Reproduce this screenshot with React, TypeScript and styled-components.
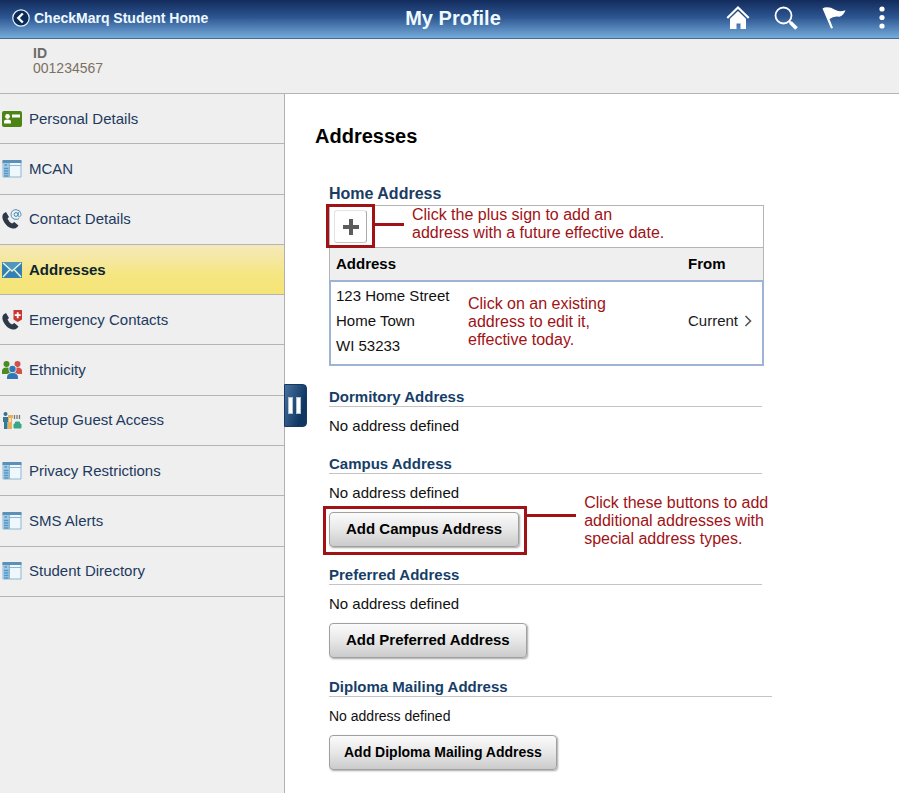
import React from "react";
import styled, { createGlobalStyle, css } from "styled-components";

const GlobalStyle = createGlobalStyle`
  *, *::before, *::after { box-sizing: border-box; }
  body {
    margin: 0;
    background: #fff;
    color: #111;
    font: 15px/20px "Liberation Sans", Arial, sans-serif;
  }
  #root { display: flex; flex-direction: column; min-height: 100vh; }
`;

const RED = "#a01216";

/* ---------- header ---------- */

const TopBar = styled.header`
  display: grid;
  grid-template-columns: 1fr auto 1fr;
  align-items: center;
  height: 39px;
  padding: 0 5px 2px 12px;
  color: #fff;
  background: linear-gradient(#132b5c, #2c5590 45%, #76acdc);
  border-bottom: 1px solid #46698c;
`;

const BackLink = styled.a`
  display: flex;
  align-items: center;
  gap: 4px;
  color: #eef9ff;
  font-size: 14px;
  font-weight: bold;
  text-decoration: none;
  white-space: nowrap;
`;

const PageTitle = styled.h1`
  margin: 0;
  color: #eefaff;
  font-size: 20px;
  line-height: 24px;
`;

const Actions = styled.div`
  display: flex;
  justify-content: flex-end;
  align-items: center;
  gap: 24px;
`;

const IconButton = styled.button`
  display: flex;
  padding: 0;
  border: 0;
  background: none;
  color: #fff;
  cursor: pointer;
`;

const IdBar = styled.dl`
  margin: 0;
  padding: 7px 33px 17px;
  min-height: 55px;
  background: #efefef;
  border-bottom: 1px solid #b4b4b4;
  font-size: 14px;
  line-height: 15px;
  color: #7d6f62;

  dt { font-weight: bold; color: #6e6a68; }
  dd { margin: 0; }
`;

/* ---------- side navigation ---------- */

const Columns = styled.div`
  display: flex;
  flex: 1;
`;

const Sidebar = styled.aside`
  position: relative;
  flex: none;
  width: 285px;
  background: #efefef;
  border-right: 1px solid #b0b0b0;
`;

const NavList = styled.ul`
  display: grid;
  grid-auto-rows: 1fr;
  min-height: 503px;
  margin: 0;
  padding: 0;
  list-style: none;
`;

const NavLink = styled.a<{ $active?: boolean }>`
  display: flex;
  align-items: center;
  gap: 7px;
  height: 100%;
  padding-left: 2px;
  border-bottom: 1px solid #b4b4b4;
  color: #213a5e;
  text-decoration: none;
  ${(p) =>
    p.$active &&
    css`
      color: #0c2430;
      font-weight: bold;
      background: linear-gradient(#f4e9bc, #f6e682 60%, #f5e476);
    `}
`;

const CollapseButton = styled.button`
  position: absolute;
  top: 290px;
  left: 284px;
  z-index: 1;
  display: flex;
  justify-content: center;
  align-items: center;
  gap: 3px;
  width: 23px;
  height: 43px;
  padding: 0 2px 0 0;
  border: 1px solid #173a63;
  border-radius: 0 4px 4px 0;
  background: linear-gradient(105deg, #47719f, #103762 75%);

  span {
    width: 5px;
    height: 17px;
    background: #fff;
    border: 1px solid #b4c3d4;
  }
`;

/* ---------- main content ---------- */

const Main = styled.main`
  flex: 1;
  padding: 30px 30px 24px;
`;

const Heading = styled.h2`
  margin: 0 0 35px;
  font-size: 20px;
  line-height: 24px;
  color: #000;
`;

const Sections = styled.div`
  display: flex;
  flex-direction: column;
  gap: 19px;
  max-width: 457px;
  padding-left: 14px;
`;

const HomeSection = styled.section`
  margin-bottom: 3px;
`;

const HomeHeading = styled.h3`
  margin: 0;
  font-size: 16px;
  line-height: 22px;
  color: #1a3d63;
`;

const GridBox = styled.div`
  max-width: 435px;
`;

const GridToolbar = styled.div`
  display: flex;
  align-items: center;
  height: 42px;
  padding: 0 4px;
  border: 1px solid #b5b5b5;
  border-bottom: 0;
`;

const Callout = styled.div<{ $kind: "icon" | "button" }>`
  position: relative;
  width: fit-content;

  &::before {
    content: "";
    position: absolute;
    border: 3px solid ${RED};
    pointer-events: none;
    inset: ${(p) => (p.$kind === "icon" ? "-6px -8px -5px" : "-6px -8px -8px -6px")};
  }
  &::after {
    content: "";
    position: absolute;
    left: calc(100% + 8px);
    top: ${(p) => (p.$kind === "icon" ? "13px" : "2px")};
    width: ${(p) => (p.$kind === "icon" ? "29px" : "49px")};
    height: 3px;
    background: ${RED};
  }
`;

const Note = styled.p<{ $kind: "icon" | "button" | "row" }>`
  position: absolute;
  z-index: 1;
  margin: 0;
  color: ${RED};
  font-size: 16px;
  font-weight: normal;
  line-height: 18px;
  white-space: nowrap;
  pointer-events: none;
  ${(p) =>
    ({
      icon: "left: calc(100% + 45px); top: -4px;",
      button: "left: calc(100% + 65px); top: -18px;",
      row: "left: 137px; top: 13px;",
    })[p.$kind]}
`;

const PlusButton = styled.button`
  display: flex;
  align-items: center;
  justify-content: center;
  width: 33px;
  height: 33px;
  padding: 0;
  border: 1px solid #e3e3e3;
  border-right-color: #aaa;
  border-bottom-color: #c4c4c4;
  border-radius: 3px;
  background: #fff;
  cursor: pointer;
`;

const AddressTable = styled.table`
  width: 100%;
  border-collapse: separate;
  border-spacing: 0;
  text-align: left;

  th {
    height: 33px;
    padding: 0 6px;
    background: #efefef;
    border: solid #b5b5b5;
    border-width: 1px 0 0;
    color: #000;
  }
  th:first-child { border-left-width: 1px; }
  th:last-child { width: 82px; border-right-width: 1px; }

  td {
    position: relative;
    padding: 1px 6px 6px 5px;
    border: solid #9fb4d4;
    border-width: 2px 0;
  }
  td:first-child { border-left-width: 2px; }
  td:last-child { border-right-width: 2px; padding-left: 6px; }
`;

const Street = styled.address`
  font-style: normal;
  line-height: 25px;
`;

const RowLink = styled.a`
  display: flex;
  align-items: center;
  gap: 6px;
  color: #1a1a1a;
  text-decoration: none;
`;

const SectionHeading = styled.h3<{ $wide?: boolean }>`
  margin: 0 0 9px;
  border-bottom: 1px solid #c4c4c4;
  max-width: ${(p) => (p.$wide ? "443px" : "433px")};
  font-size: 15px;
  line-height: ${(p) => (p.$wide ? "19px" : "18px")};
  color: #163e68;
`;

const Empty = styled.p<{ $compact?: boolean }>`
  margin: 0;
  font-size: ${(p) => (p.$compact ? "14px" : "15px")};
`;

const AddButton = styled.button<{ $compact?: boolean }>`
  display: block;
  height: 35px;
  padding: 0 16px 2px;
  border: 1px solid #a0a0a0;
  border-radius: 4px;
  background: linear-gradient(#fbfbfb, #e7e7e7 50%, #cbcbcb);
  box-shadow: 1px 1px 2px rgba(0, 0, 0, 0.35);
  color: #000;
  font: bold 15px/20px "Liberation Sans", Arial, sans-serif;
  white-space: nowrap;
  cursor: pointer;
  ${(p) => p.$compact && "font-size: 14px; padding: 0 14px 2px;"}
`;

const ButtonRow = styled.div`
  display: flex;
  margin-top: 9px;
`;

/* ---------- icons ---------- */

const PHONE =
  "M1.500 4.500Q-.5 7 1 11q3 7 9.500 8.500 3 .5 4.800-1.500l1.200-1.500-4.200-3.500-2.300 1.500Q7 13 5.500 9.500L7 8 4 3z";

const CardIcon = () => (
  <svg width="20" height="20" viewBox="0 0 20 20" aria-hidden="true">
    <rect y="2" width="20" height="16" rx="2" fill="#4d8515" />
    <circle cx="5.500" cy="7.500" r="2.400" fill="#fff" />
    <path d="M2 14.500v-2q0-2 3.500-2t3.500 2v2zM10 5.500h8v3h-8z" fill="#fff" />
  </svg>
);

const WindowIcon = () => (
  <svg width="20" height="20" viewBox="0 0 20 20" aria-hidden="true">
    <path d="M1 2h18v16H1z" fill="#edf7fc" stroke="#8fb6d0" />
    <path d="M.5 1h19v3H.5z" fill="#5c90b6" />
    <path d="M1 4h6v14H1z" fill="#a0cae5" />
    <path d="M2.500 6h2.500M2 9.500h4.500M2 12h4.500M2 14.500h4.500M2 17h4.500" stroke="#5596c4" strokeWidth="1.500" />
    <path d="M7.500 4v14M6 6.500h13" stroke="#8fb6d0" fill="none" />
  </svg>
);

const ContactIcon = () => (
  <svg width="20" height="20" viewBox="0 0 20 20" aria-hidden="true">
    <path d={PHONE} fill="#2d3948" />
    <circle cx="14" cy="5.500" r="1.900" fill="none" stroke="#3d87b7" />
    <path
      d="M16.300 3v3.500q0 1.500 1.300 1.300 1.600-.6 1.500-2.600Q18.500.9 14 .6 9.300.9 9 5.500q.4 4.600 5 4.900 1.700 0 3-.8"
      fill="none"
      stroke="#4f92bf"
    />
  </svg>
);

const MailIcon = () => (
  <svg width="20" height="20" viewBox="0 0 20 20" aria-hidden="true">
    <path d="M0 2h20v16H0z" fill="#3381b4" />
    <path d="M0 2h20l-10 8z" fill="#5295bd" />
    <path d="M1 3l9 8 9-8M1 17l6.500-7M19 17l-6.500-7" fill="none" stroke="#e8f6dd" strokeWidth="1.400" />
  </svg>
);

const EmergencyIcon = () => (
  <svg width="20" height="20" viewBox="0 0 20 20" aria-hidden="true">
    <path d={PHONE} fill="#2d3948" />
    <path d="M11.500 0h8.500v9.500L15.700 12l-4.200-2.500z" fill="#c63732" />
    <path d="M15.700 2.200v6M12.700 5.200h6" stroke="#fff" strokeWidth="1.800" />
  </svg>
);

const PeopleIcon = () => (
  <svg width="20" height="20" viewBox="0 0 20 20" aria-hidden="true">
    <circle cx="4.500" cy="4" r="3" fill="#4c8a22" />
    <path d="M0 14V11q0-3.500 4.500-3.500T9 11v3z" fill="#4c8a22" />
    <circle cx="15.500" cy="4" r="3" fill="#d0504a" />
    <path d="M11 14v-3q0-3.500 4.500-3.500T20 11v3z" fill="#d0504a" />
    <circle cx="10.500" cy="9" r="4" fill="#efefef" />
    <path d="M4 20v-3q0-4.500 6.500-4.500T17 17v3z" fill="#efefef" />
    <circle cx="10.500" cy="9" r="3.200" fill="#2f78b5" />
    <path d="M5 19v-1.500q0-4.500 5.500-4.500t5.500 4.500V19z" fill="#2f78b5" />
  </svg>
);

const GuestIcon = () => (
  <svg width="20" height="20" viewBox="0 0 20 20" aria-hidden="true">
    <circle cx="3.500" cy="4" r="2" fill="#35708f" />
    <path d="M1 7h5v5H5.500v7H2v-7H1z" fill="#397894" />
    <path d="M6 5h5v3h-1v11H6z" fill="#e9ae58" />
    <path d="M7 8h2v4H7z" fill="#f8e1b8" />
    <path d="M12.500 5v4M15 5v4M17.500 5v4" stroke="#777" strokeWidth="1.300" />
    <path d="M12 14h7v4h-7zM13.500 14v-2h4v2" fill="#37a789" stroke="#37a789" />
  </svg>
);

const navItems = [
  { label: "Personal Details", Icon: CardIcon },
  { label: "MCAN", Icon: WindowIcon },
  { label: "Contact Details", Icon: ContactIcon },
  { label: "Addresses", Icon: MailIcon, active: true },
  { label: "Emergency Contacts", Icon: EmergencyIcon },
  { label: "Ethnicity", Icon: PeopleIcon },
  { label: "Setup Guest Access", Icon: GuestIcon },
  { label: "Privacy Restrictions", Icon: WindowIcon },
  { label: "SMS Alerts", Icon: WindowIcon },
  { label: "Student Directory", Icon: WindowIcon },
];

export default function App() {
  return (
    <>
      <GlobalStyle />
      <TopBar>
        <BackLink href="#home">
          <svg width="18" height="18" viewBox="0 0 18 18" aria-hidden="true">
            <circle cx="9" cy="9" r="8.200" fill="#0c2c57" stroke="#e3f4ff" strokeWidth="1.200" />
            <path d="M10.800 4.500L6.300 9l4.500 4.500" fill="none" stroke="#fff" strokeWidth="2.400" />
          </svg>
          CheckMarq Student Home
        </BackLink>
        <PageTitle>My Profile</PageTitle>
        <Actions>
          <IconButton aria-label="Home">
            <svg width="24" height="24" viewBox="0 0 24 24" fill="currentColor">
              <path d="M12 0L23.500 11.200 22 12.700 12 3 2 12.700.5 11.200z" />
              <path d="M12 5l8 7.700V23h-5.500v-5.500h-4V23H4V12.700z" />
            </svg>
          </IconButton>
          <IconButton aria-label="Search">
            <svg width="24" height="24" viewBox="0 0 24 24" fill="none" stroke="currentColor">
              <circle cx="9.500" cy="9.500" r="8" strokeWidth="1.800" />
              <path d="M15 15l2 2" strokeWidth="2" />
              <path d="M16.500 16.500l6 6" strokeWidth="3.800" />
            </svg>
          </IconButton>
          <IconButton aria-label="Notifications">
            <svg width="24" height="24" viewBox="0 0 24 24" fill="currentColor">
              <path d="M.5 2.500L2.500 1.500Q8 .5 12.500 3.500t11 .8Q22 9 17.500 10.800 12 9.500 7.500 13L11 22l-2 .6z" />
            </svg>
          </IconButton>
          <IconButton aria-label="More actions">
            <svg width="24" height="24" viewBox="0 0 24 24" fill="currentColor">
              <circle cx="12" cy="3" r="2.600" />
              <circle cx="12" cy="11.500" r="2.600" />
              <circle cx="12" cy="20" r="2.600" />
            </svg>
          </IconButton>
        </Actions>
      </TopBar>
      <IdBar>
        <dt>ID</dt>
        <dd>001234567</dd>
      </IdBar>
      <Columns>
        <Sidebar>
          <nav aria-label="Profile">
            <NavList>
              {navItems.map(({ label, Icon, active }) => (
                <li key={label}>
                  <NavLink href="#profile" $active={active} aria-current={active ? "page" : undefined}>
                    <Icon />
                    {label}
                  </NavLink>
                </li>
              ))}
            </NavList>
          </nav>
          <CollapseButton aria-label="Collapse navigation">
            <span />
            <span />
          </CollapseButton>
        </Sidebar>
        <Main>
          <Heading>Addresses</Heading>
          <Sections>
            <HomeSection>
              <HomeHeading>Home Address</HomeHeading>
              <GridBox>
                <GridToolbar>
                  <Callout $kind="icon">
                    <PlusButton aria-label="Add home address">
                      <svg width="16" height="16" viewBox="0 0 16 16" aria-hidden="true">
                        <path d="M8 0v16M0 8h16" stroke="#5c5c5c" strokeWidth="4" />
                      </svg>
                    </PlusButton>
                    <Note $kind="icon">
                      Click the plus sign to add an
                      <br />
                      address with a future effective date.
                    </Note>
                  </Callout>
                </GridToolbar>
                <AddressTable>
                  <thead>
                    <tr>
                      <th scope="col">Address</th>
                      <th scope="col">From</th>
                    </tr>
                  </thead>
                  <tbody>
                    <tr>
                      <td>
                        <Street>
                          123 Home Street
                          <br />
                          Home Town
                          <br />
                          WI 53233
                        </Street>
                        <Note $kind="row">
                          Click on an existing
                          <br />
                          address to edit it,
                          <br />
                          effective today.
                        </Note>
                      </td>
                      <td>
                        <RowLink href="#edit">
                          Current
                          <svg width="8" height="12" viewBox="0 0 8 12" aria-hidden="true">
                            <path d="M1.500 1l5 5-5 5" fill="none" stroke="#555" strokeWidth="1.600" />
                          </svg>
                        </RowLink>
                      </td>
                    </tr>
                  </tbody>
                </AddressTable>
              </GridBox>
            </HomeSection>

            <section>
              <SectionHeading>Dormitory Address</SectionHeading>
              <Empty>No address defined</Empty>
            </section>

            <section>
              <SectionHeading>Campus Address</SectionHeading>
              <Empty>No address defined</Empty>
              <ButtonRow>
                <Callout $kind="button">
                  <AddButton>Add Campus Address</AddButton>
                  <Note $kind="button">
                    Click these buttons to add
                    <br />
                    additional addresses with
                    <br />
                    special address types.
                  </Note>
                </Callout>
              </ButtonRow>
            </section>

            <section>
              <SectionHeading>Preferred Address</SectionHeading>
              <Empty>No address defined</Empty>
              <ButtonRow>
                <AddButton>Add Preferred Address</AddButton>
              </ButtonRow>
            </section>

            <section>
              <SectionHeading $wide>Diploma Mailing Address</SectionHeading>
              <Empty $compact>No address defined</Empty>
              <ButtonRow>
                <AddButton $compact>Add Diploma Mailing Address</AddButton>
              </ButtonRow>
            </section>
          </Sections>
        </Main>
      </Columns>
    </>
  );
}
